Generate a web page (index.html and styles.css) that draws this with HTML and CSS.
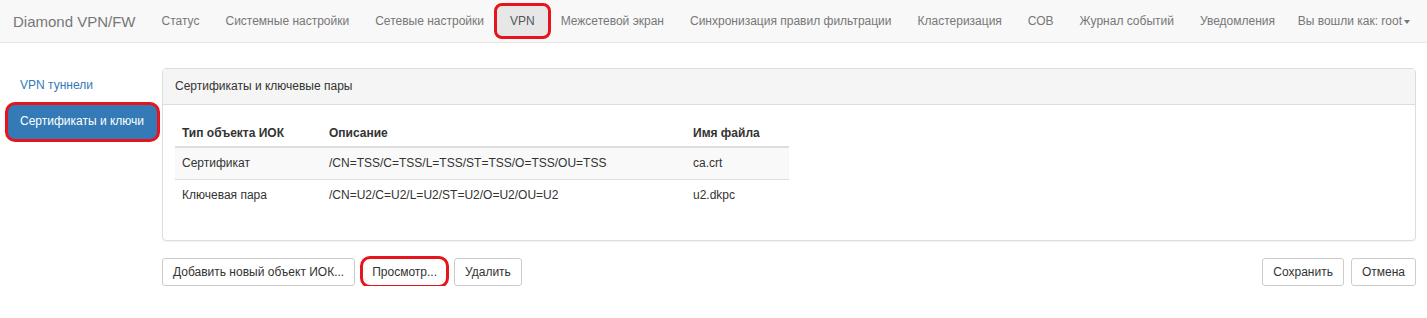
FILE: index.html
```html
<!DOCTYPE html>
<html lang="ru">
<head>
  <meta charset="UTF-8" />
  <title>Diamond VPN/FW</title>
  <link rel="stylesheet" href="styles.css">
</head>
<body>

  <nav class="navbar">
    <span class="brand">Diamond VPN/FW</span>
    <ul class="nav">
      <li><a href="#">Статус</a></li>
      <li><a href="#">Системные настройки</a></li>
      <li><a href="#">Сетевые настройки</a></li>
      <li class="active marked"><a href="#">VPN</a></li>
      <li><a href="#">Межсетевой экран</a></li>
      <li><a href="#">Синхронизация правил фильтрации</a></li>
      <li><a href="#">Кластеризация</a></li>
      <li><a href="#">СОВ</a></li>
      <li><a href="#">Журнал событий</a></li>
      <li><a href="#">Уведомления</a></li>
    </ul>
    <a class="user" href="#">Вы вошли как: root<span class="caret"></span></a>
  </nav>

  <div class="main">
    <ul class="sidenav">
      <li><a href="#">VPN туннели</a></li>
      <li class="active marked"><a href="#">Сертификаты и ключи</a></li>
    </ul>

    <div class="content">
      <div class="panel">
        <div class="panel-heading">Сертификаты и ключевые пары</div>
        <div class="panel-body">
          <table class="table">
            <thead>
              <tr>
                <th class="c1">Тип объекта ИОК</th>
                <th class="c2">Описание</th>
                <th class="c3">Имя файла</th>
              </tr>
            </thead>
            <tbody>
              <tr>
                <td>Сертификат</td>
                <td>/CN=TSS/C=TSS/L=TSS/ST=TSS/O=TSS/OU=TSS</td>
                <td>ca.crt</td>
              </tr>
              <tr>
                <td>Ключевая пара</td>
                <td>/CN=U2/C=U2/L=U2/ST=U2/O=U2/OU=U2</td>
                <td>u2.dkpc</td>
              </tr>
            </tbody>
          </table>
        </div>
      </div>

      <div class="actions">
        <div class="group">
          <button>Добавить новый объект ИОК...</button>
          <button class="marked">Просмотр...</button>
          <button>Удалить</button>
        </div>
        <div class="group">
          <button>Сохранить</button>
          <button>Отмена</button>
        </div>
      </div>
    </div>
  </div>

</body>
</html>
```

FILE: styles.css
```css
body {
  margin: 0;
  font-family: "Liberation Sans", Arial, sans-serif;
  font-size: 12px;
  color: #333;
  background: #fff;
  white-space: nowrap;
}
a {
  text-decoration: none;
}
ul {
  list-style: none;
  margin: 0;
  padding: 0;
}

/* red annotation frames */
.marked {
  position: relative;
}
.marked::after {
  content: "";
  position: absolute;
  top: -3px;
  right: -3px;
  bottom: -3px;
  left: -3px;
  border: 3px solid #e8141c;
  border-radius: 8px;
  pointer-events: none;
}

.navbar {
  display: flex;
  align-items: center;
  height: 42px;
  background: #f8f8f8;
  border-bottom: 1px solid #e7e7e7;
  padding: 0 17px 0 13px;
}
.brand {
  font-size: 15px;
  color: #777;
  margin-right: 13px;
}
.nav {
  display: flex;
  align-items: center;
}
.nav li a {
  display: block;
  color: #777;
  padding: 0 13px;
  line-height: 42px;
}
.nav li.active a {
  background: #e7e7e7;
  color: #555;
  line-height: 34px;
  border-radius: 6px;
}
.nav li.active::after {
  top: -1px;
  bottom: -1px;
  left: -3px;
  right: -3px;
}
.user {
  margin-left: auto;
  color: #777;
}
.caret {
  display: inline-block;
  width: 0;
  height: 0;
  margin-left: 2px;
  vertical-align: middle;
  border-top: 4px solid #777;
  border-left: 3px solid transparent;
  border-right: 3px solid transparent;
}

.main {
  display: flex;
  gap: 5px;
  padding: 25px 11px 0 8px;
}
.sidenav {
  width: 149px;
  flex-shrink: 0;
}
.sidenav li a {
  display: block;
  padding: 10px 12px;
  line-height: 15px;
  color: #337ab7;
  border-radius: 4px;
}
.sidenav li + li {
  margin-top: 2px;
}
.sidenav li.active a {
  background: #337ab7;
  color: #fff;
  padding: 9px 12px 10px;
}
.sidenav li.active::after {
  border-radius: 10px;
}

.content {
  flex: 1;
}
.panel {
  border: 1px solid #ddd;
  border-radius: 4px;
  box-shadow: 0 1px 1px rgba(0, 0, 0, 0.05);
}
.panel-heading {
  background: #f5f5f5;
  border-bottom: 1px solid #ddd;
  padding: 10px 12px;
  line-height: 15px;
}
.panel-body {
  padding: 12px 12px 29px;
}
.table {
  border-collapse: collapse;
  width: 614px;
}
.table th {
  text-align: left;
  font-weight: bold;
  padding: 9px 7px 5px;
  line-height: 15px;
  border-bottom: 2px solid #ddd;
}
.table td {
  padding: 8px 7px;
  line-height: 15px;
  border-top: 1px solid #ddd;
}
.table tbody tr:first-child td {
  border-top: 0;
}
.table tbody tr:nth-child(odd) {
  background: #f9f9f9;
}
.table .c1 {
  width: 133px;
}
.table .c2 {
  width: 350px;
}

.actions {
  display: flex;
  justify-content: space-between;
  margin-top: 17px;
}
.group {
  display: flex;
  gap: 7px;
}
button {
  font-family: inherit;
  font-size: 12px;
  color: #333;
  background: #fff;
  border: 1px solid #ccc;
  border-radius: 3px;
  padding: 0 10px;
  height: 28px;
  cursor: pointer;
}
button.marked {
  padding: 0 9px;
}
button.marked::after {
  border-radius: 10px;
}
```
